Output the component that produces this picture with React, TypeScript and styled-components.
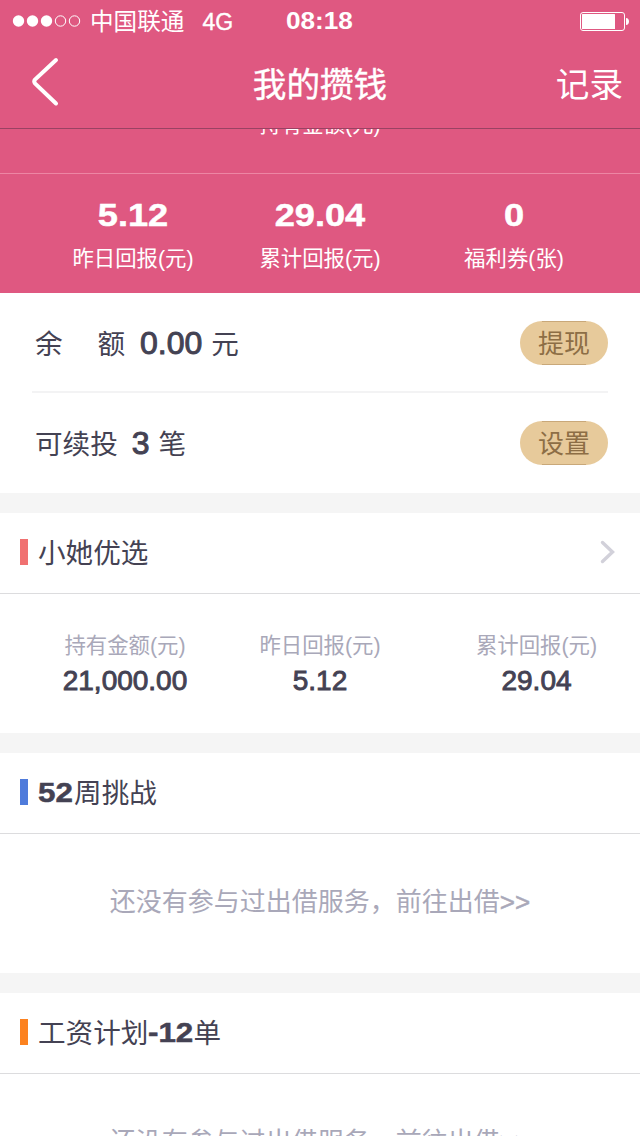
import React from "react";
import styled, { createGlobalStyle } from "styled-components";

const PINK = "#df5881";
const INK = "#444253";
const MUTED = "#a9a8b9";

const GlobalStyle = createGlobalStyle`
  *, *::before, *::after { box-sizing: border-box; }
  body {
    margin: 0;
    background: #fff;
    color: ${INK};
    font-family: "Liberation Sans", "Noto Sans CJK SC", sans-serif;
  }
`;

const Screen = styled.div`
  width: 640px;
  height: 1136px;
  overflow: hidden;
  background: #fff;
  white-space: nowrap;
`;

const Header = styled.header`
  height: 129px;
  background: ${PINK};
  border-bottom: 1px solid #9a4263;
  color: #fff;
`;

const StatusBar = styled.div`
  height: 40px;
  display: grid;
  grid-template-columns: 286px 1fr auto;
  align-items: center;
  padding: 0 11px 0 0;
  line-height: 40px;
`;

const Carrier = styled.div`
  display: flex;
  align-items: center;
  padding-left: 12px;
  font-size: 23.6px;
`;

const CarrierName = styled.span`
  padding-top: 2px;
`;

const Signal = styled.svg`
  display: block;
  margin-right: 8px;
`;

const Network = styled.span`
  margin-left: 18px;
  font-size: 23px;
  -webkit-text-stroke: 0.4px currentColor;
  padding-top: 1px;
`;

const Clock = styled.span`
  justify-self: start;
  font-size: 24px;
  font-weight: 700;
  transform: scaleX(1.09);
  transform-origin: left;
`;

const NavBar = styled.nav`
  height: 88px;
  display: grid;
  grid-template-columns: 160px 1fr 160px;
  align-items: center;
  padding-top: 4px;
  font-size: 33.6px;
  line-height: 84px;
`;

const BackIcon = styled.svg`
  display: block;
  margin: -8px 0 0 30px;
`;

const NavTitle = styled.h1`
  margin: 0;
  font-size: inherit;
  font-weight: 400;
  text-align: center;
  -webkit-text-stroke: 0.4px currentColor;
`;

const NavAction = styled.span`
  padding-right: 17px;
  text-align: right;
`;

const Hero = styled.div`
  height: 44px;
  overflow: hidden;
  background: ${PINK};
  color: #fff;
  text-align: center;
`;

const Label = styled.div`
  font-size: 21.4px;
  line-height: 30px;
`;

const HeroLabel = styled(Label)`
  margin-top: -19px;
`;

const Totals = styled.section`
  height: 120px;
  display: grid;
  grid-template-columns: 186px 188px 200px;
  padding: 21px 0 0 40px;
  border-top: 1px solid #ed86a4;
  background: ${PINK};
  color: #fff;
  text-align: center;
`;

const TotalValue = styled.div`
  height: 40px;
  margin-bottom: 9px;
  font-size: 32px;
  line-height: 40px;
  font-weight: 700;
  transform: scaleX(1.13);
  -webkit-text-stroke: 0.5px currentColor;
`;

const Rows = styled.section`
  height: 200px;
  padding: 0 32px;
`;

const Row = styled.div<{ $divided?: boolean }>`
  height: 100px;
  display: flex;
  align-items: center;
  padding: ${(p) => (p.$divided ? "2px" : "0")} 0 0 3px;
  border-bottom: ${(p) => (p.$divided ? "2px solid #f3f3f4" : "0")};
  font-size: 27.6px;
  line-height: 40px;
`;

const RowText = styled.span<{ $width?: number }>`
  width: ${(p) => (p.$width ? `${p.$width}px` : "auto")};
  display: flex;
  justify-content: space-between;
  padding-top: 4px;
`;

const Amount = styled.span<{ $before: number }>`
  margin: 0 9px 0 ${(p) => p.$before}px;
  font-size: 32px;
  -webkit-text-stroke: 1px currentColor;
`;

const Pill = styled.button`
  width: 88px;
  height: 44px;
  margin-left: auto;
  padding: 2px 0 0;
  border: 0;
  border-radius: 22px;
  background:
    linear-gradient(#c9a879, #c9a879) center top / 44px 1px no-repeat,
    linear-gradient(#c9a879, #c9a879) center bottom / 44px 1px no-repeat,
    #e7ca9b;
  color: #8d6e45;
  font-family: inherit;
  font-size: 26px;
  line-height: 42px;
`;

const Product = styled.section`
  height: 240px;
  border-top: 20px solid #f5f5f5;
`;

const ProductHead = styled.header`
  height: 81px;
  display: flex;
  align-items: center;
  padding: 0 25px 2px 20px;
  border-bottom: 1px solid #dcdcde;
`;

const Marker = styled.i<{ $color: string }>`
  width: 8px;
  height: 26px;
  margin-right: 10px;
  background: ${(p) => p.$color};
`;

const ProductName = styled.h2`
  margin: 0;
  padding-top: 3px;
  font-size: 27.6px;
  font-weight: 400;
  line-height: 40px;
`;

const Digits = styled.b`
  display: inline-block;
  margin-right: 6px;
  font-size: 27px;
  line-height: 38px;
  transform: translateY(-1px) scaleX(1.16);
  transform-origin: left;
  -webkit-text-stroke: 0.5px currentColor;
`;

const Chevron = styled.svg`
  display: block;
  margin-left: auto;
`;

const Figures = styled.div`
  display: grid;
  grid-template-columns: 200px 190px 225px;
  padding: 37px 0 0 25px;
  text-align: center;
`;

const Figure = styled.div`
  &:last-child { padding-left: 18px; }
`;

const FigureLabel = styled(Label)`
  color: ${MUTED};
`;

const FigureValue = styled.div`
  font-size: 28px;
  line-height: 40px;
  -webkit-text-stroke: 0.9px currentColor;
`;

const Empty = styled.p`
  margin: 0;
  padding-top: 48px;
  color: ${MUTED};
  font-size: 26px;
  line-height: 40px;
  text-align: center;
`;

const Arrows = styled.span`
  -webkit-text-stroke: 0.5px currentColor;
`;

const totals = [
  { value: "5.12", label: "昨日回报(元)" },
  { value: "29.04", label: "累计回报(元)" },
  { value: "0", label: "福利券(张)" },
];

const figures = [
  { label: "持有金额(元)", value: "21,000.00" },
  { label: "昨日回报(元)", value: "5.12" },
  { label: "累计回报(元)", value: "29.04" },
];

function EmptyNote() {
  return (
    <Empty>
      还没有参与过出借服务，前往出借<Arrows>&gt;&gt;</Arrows>
    </Empty>
  );
}

export default function App() {
  return (
    <>
      <GlobalStyle />
      <Screen>
        <Header>
          <StatusBar>
            <Carrier>
              <Signal width="70" height="14" viewBox="0 0 70 14">
                {[0, 1, 2, 3, 4].map((i) => (
                  <circle
                    key={i}
                    cx={6.5 + i * 14}
                    cy="7"
                    r={i < 3 ? 5.7 : 5.2}
                    fill={i < 3 ? "#fff" : "none"}
                    stroke={i < 3 ? "none" : "#fff"}
                  />
                ))}
              </Signal>
              <CarrierName>中国联通</CarrierName>
              <Network>4G</Network>
            </Carrier>
            <Clock>08:18</Clock>
            <svg width="49" height="20" viewBox="0 0 49 20">
              <rect x="0.5" y="1.5" width="44" height="18" rx="2.5" fill="none" stroke="#fff" />
              <rect x="2" y="3" width="33" height="15" rx="0.5" fill="#fff" />
              <path d="M46 7c4 0 4 7 0 7z" fill="#fff" />
            </svg>
          </StatusBar>
          <NavBar>
            <BackIcon width="30" height="50" viewBox="0 0 30 50">
              <path
                d="M26 3L5 22.6Q3.5 24.5 5 26.4L26 46.5"
                fill="none"
                stroke="#fff"
                strokeWidth="4"
                strokeLinecap="round"
              />
            </BackIcon>
            <NavTitle>我的攒钱</NavTitle>
            <NavAction>记录</NavAction>
          </NavBar>
        </Header>
        <Hero>
          <HeroLabel>持有金额(元)</HeroLabel>
        </Hero>
        <Totals>
          {totals.map((t) => (
            <div key={t.label}>
              <TotalValue>{t.value}</TotalValue>
              <Label>{t.label}</Label>
            </div>
          ))}
        </Totals>
        <Rows>
          <Row $divided>
            <RowText $width={90}>
              <span>余</span>
              <span>额</span>
            </RowText>
            <Amount $before={15}>0.00</Amount>
            <RowText>元</RowText>
            <Pill>提现</Pill>
          </Row>
          <Row>
            <RowText>可续投</RowText>
            <Amount $before={14}>3</Amount>
            <RowText>笔</RowText>
            <Pill>设置</Pill>
          </Row>
        </Rows>
        <Product>
          <ProductHead>
            <Marker $color="#f07171" />
            <ProductName>小她优选</ProductName>
            <Chevron width="15" height="24" viewBox="0 0 15 24">
              <path
                d="M2.5 2.5L12.5 12L2.5 21.5"
                fill="none"
                stroke="#d2d1da"
                strokeWidth="3.4"
                strokeLinecap="round"
              />
            </Chevron>
          </ProductHead>
          <Figures>
            {figures.map((f) => (
              <Figure key={f.label}>
                <FigureLabel>{f.label}</FigureLabel>
                <FigureValue>{f.value}</FigureValue>
              </Figure>
            ))}
          </Figures>
        </Product>
        <Product>
          <ProductHead>
            <Marker $color="#4f7bdb" />
            <ProductName>
              <Digits>52</Digits>周挑战
            </ProductName>
          </ProductHead>
          <EmptyNote />
        </Product>
        <Product>
          <ProductHead>
            <Marker $color="#fc8220" />
            <ProductName>
              工资计划<Digits>-12</Digits>单
            </ProductName>
          </ProductHead>
          <EmptyNote />
        </Product>
      </Screen>
    </>
  );
}
